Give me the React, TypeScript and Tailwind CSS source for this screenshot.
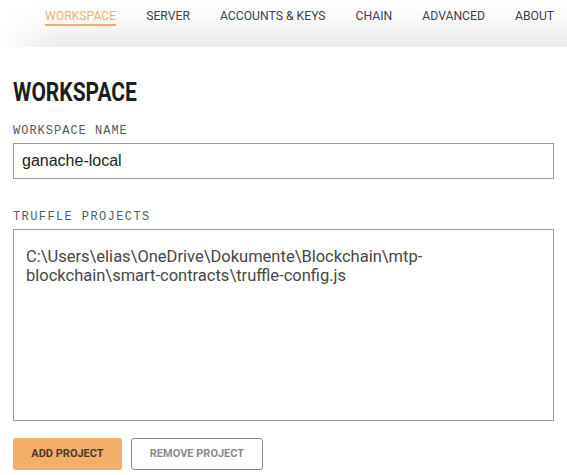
const navItems = ["WORKSPACE", "SERVER", "ACCOUNTS & KEYS", "CHAIN", "ADVANCED", "ABOUT"];

export default function App() {
  return (
    <div className="min-h-[475px] w-[567px] overflow-hidden bg-white">
      <nav className="flex h-[47px] items-start gap-[30px] bg-[linear-gradient(to_right,#ffffff_0px,rgba(255,255,255,0)_60px),linear-gradient(to_bottom,#ffffff_0%,#fafafa_40%,#eaeaea_100%)] pl-[45px] pt-[8px] font-['Roboto',sans-serif] text-[12.2px] whitespace-nowrap text-[#3c4250]">
        {navItems.map((item, idx) => (
          <span
            key={item}
            className={
              idx === 0
                ? "border-b-2 border-[#e9ad6f] leading-[16px] text-[#eab176]"
                : "leading-[16px]"
            }
          >
            {item}
          </span>
        ))}
      </nav>

      <main className="px-[13px] pt-[32px]">
        <h1 className="origin-left scale-x-[0.84] font-['Roboto',sans-serif] text-[25px] leading-[28px] font-bold text-[#1e1e1e]">
          WORKSPACE
        </h1>

        <label className="mt-[17px] block font-['Liberation_Mono',monospace] text-[12px] leading-[14px] tracking-[1px] text-[#555b63]">
          WORKSPACE NAME
        </label>
        <div className="mt-[5px] flex h-[36px] items-center border border-[#999999] px-[8px] font-['Liberation_Sans',sans-serif] text-[16px] text-[#222222]">
          ganache-local
        </div>

        <label className="mt-[31px] block font-['Liberation_Mono',monospace] text-[12px] leading-[14px] tracking-[1.4px] text-[#555b63]">
          TRUFFLE PROJECTS
        </label>
        <div className="mt-[5px] h-[192px] border border-[#999999] px-[12px] pt-[17px] font-['Roboto',sans-serif] text-[16.5px] leading-[19px] text-[#474747]">
          C:\Users\elias\OneDrive\Dokumente\Blockchain\mtp-
          <br />
          blockchain\smart-contracts\truffle-config.js
        </div>

        <div className="mt-[17px] flex items-center gap-[9px] font-['Roboto',sans-serif] text-[11px] font-bold">
          <button className="h-[32px] w-[109px] rounded-[3px] bg-[#f2af68] text-[#4a3b2c]">
            ADD PROJECT
          </button>
          <button className="h-[32px] w-[132px] rounded-[3px] border border-[#8a8a8a] bg-white text-[#8a8a8a]">
            REMOVE PROJECT
          </button>
        </div>
      </main>
    </div>
  );
}
